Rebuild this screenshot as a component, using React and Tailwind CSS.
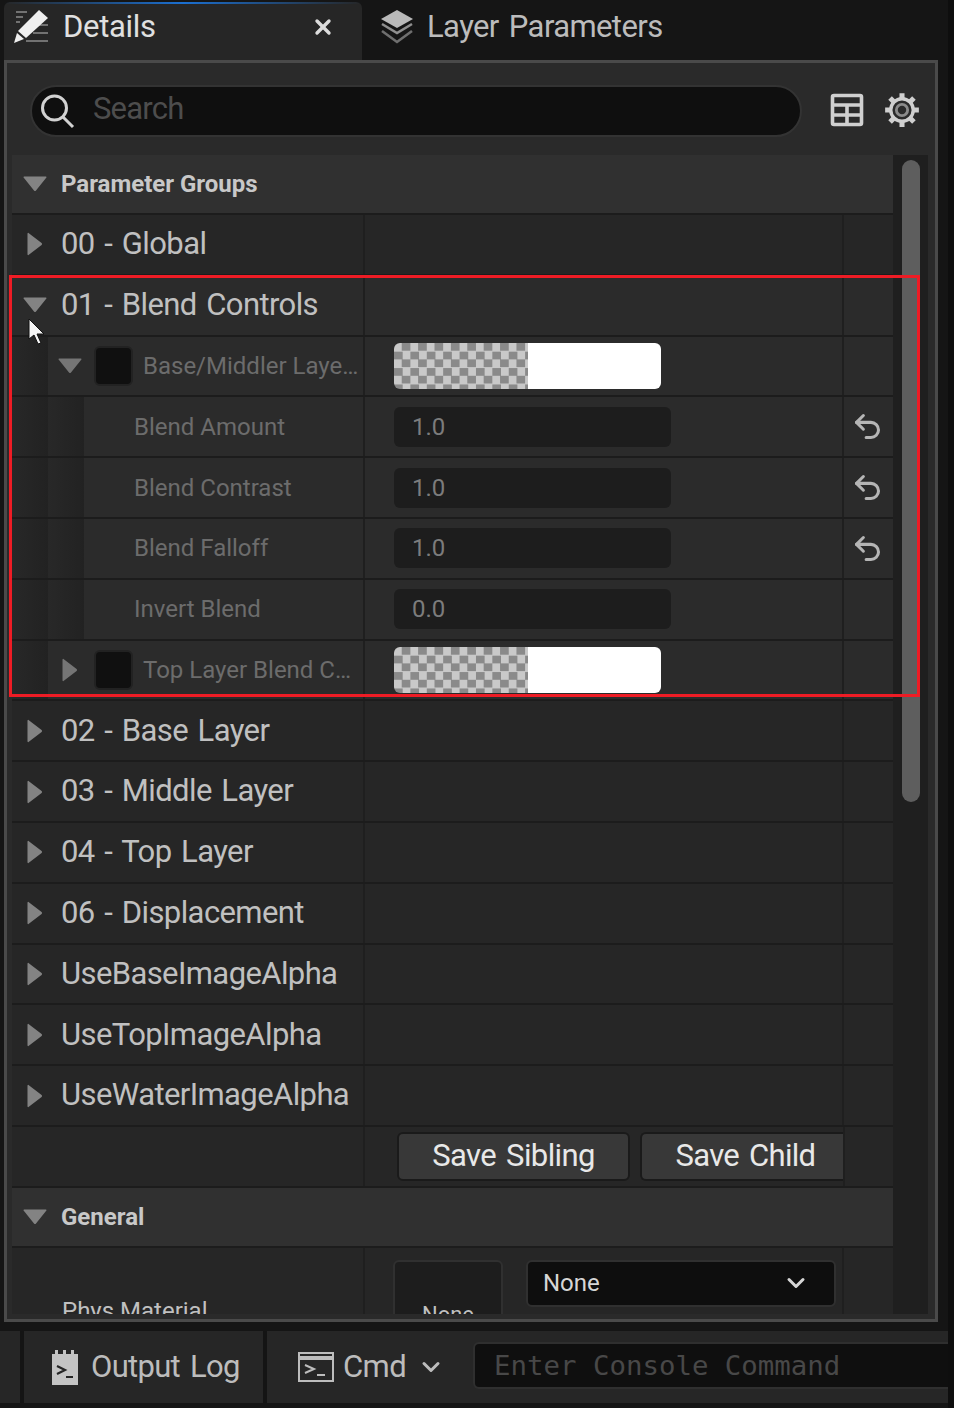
import { ChevronDown, Undo2, X } from 'lucide-react'

const Arrow = ({ open, dim }) => (
  <svg width="26" height="26" viewBox="0 0 26 26" className="shrink-0">
    {open ? (
      <path d="M2 5.5h22a.6.6 0 0 1 .4 1L14 19.5a1.4 1.4 0 0 1-2 0L1.6 6.5A.6.6 0 0 1 2 5.5z" fill={dim ? '#757575' : '#838383'} />
    ) : (
      <path d="M5.5 2.4a.6.6 0 0 1 1-.4L19.6 12a1.4 1.4 0 0 1 0 2L6.5 24a.6.6 0 0 1-1-.4z" fill={dim ? '#757575' : '#838383'} />
    )}
  </svg>
)

const DetailsIcon = () => (
  <svg width="36" height="36" viewBox="0 0 36 36" className="shrink-0">
    <path d="M3 3h11M3 8h7M3 13h4M23 16h12M20 24h15M13 32h22" stroke="#8c8c8c" strokeWidth="1.6" />
    <path d="M26 1l9 8-22 20-8-7z" fill="#efefef" />
    <path d="M4 24l7 6-10 4z" fill="#efefef" />
  </svg>
)

const LayersIcon = () => (
  <svg width="36" height="36" viewBox="0 0 36 36" className="shrink-0">
    <path d="M18 1L34 10 18 19 2 10z" fill="#b9b9b9" />
    <path d="M3 15l15 9 15-9" fill="none" stroke="#8f8f8f" strokeWidth="2.6" />
    <path d="M3 22l15 11 15-11" fill="none" stroke="#6f6f6f" strokeWidth="2.6" />
  </svg>
)

const SearchIcon = () => (
  <svg width="36" height="36" viewBox="0 0 36 36" className="shrink-0">
    <circle cx="15.5" cy="15" r="12" fill="none" stroke="#d2d2d2" strokeWidth="3" />
    <path d="M24 24l10 10" stroke="#d2d2d2" strokeWidth="3" />
  </svg>
)

const TableIcon = () => (
  <svg width="34" height="34" viewBox="0 0 34 34" className="shrink-0">
    <rect x="2.5" y="2.5" width="29" height="29" rx="1.5" fill="none" stroke="#d0d0d0" strokeWidth="3.6" />
    <path d="M2 12h30M2 22h30M17 12v20" stroke="#d0d0d0" strokeWidth="3.6" />
  </svg>
)

const GearIcon = () => (
  <svg width="36" height="36" viewBox="2 2 32 32" className="shrink-0">
    <path d="M18 3v6M18 27v6M3 18h6M27 18h6M7.4 7.4l4.2 4.2M24.4 24.4l4.2 4.2M7.4 28.6l4.2-4.2M24.4 11.6l4.2-4.2" stroke="#cfcfcf" strokeWidth="4.5" />
    <circle cx="18" cy="18" r="10" fill="none" stroke="#cfcfcf" strokeWidth="3" />
    <circle cx="18" cy="18" r="5" fill="none" stroke="#8b8b8b" strokeWidth="2.5" />
  </svg>
)

const LogIcon = () => (
  <svg width="28" height="36" viewBox="0 0 28 36" className="shrink-0">
    <path d="M1 5h3V1h3v4h5V1h3v4h5V1h3v4h4v31H1z" fill="#c4c4c4" />
    <path d="M6 17l8 4-8 4M15 28h7" fill="none" stroke="#252525" strokeWidth="2.2" />
  </svg>
)

const CmdIcon = () => (
  <svg width="36" height="30" viewBox="0 0 36 30" className="shrink-0">
    <rect x="1" y="1" width="34" height="28" fill="none" stroke="#bdbdbd" strokeWidth="2" />
    <path d="M1 6h34" stroke="#bdbdbd" strokeWidth="4" />
    <path d="M7 13l9 4-9 4M19 23h8" fill="none" stroke="#bdbdbd" strokeWidth="2" />
  </svg>
)

const CursorIcon = () => (
  <svg width="18" height="28" viewBox="0 0 18 28">
    <path d="M1 1v20l5-4 4 9 3-1-4-9h7z" fill="#f4f4f4" stroke="#111111" strokeWidth="1" />
  </svg>
)

const Swatch = () => (
  <div className="flex h-[46px] w-[267px] overflow-hidden rounded-md">
    <div className="w-[134px] bg-[repeating-conic-gradient(#8a8a8a_0_25%,#c9c9c9_0_50%)] bg-[length:16.4px_16.4px]" />
    <div className="flex-1 bg-white" />
  </div>
)

const ValueBox = ({ value }) => (
  <div className="flex h-10 w-[277px] items-center rounded-md bg-[#1d1d1d] pl-[18px] text-[24px] text-[#7c7c7c]">{value}</div>
)

const Row = ({ children, value, extra, bg = 'bg-[#262626]' }) => (
  <div className={`flex h-[60.8px] shrink-0 border-b-2 border-[#1c1c1c] ${bg}`}>
    <div className="flex w-[351px] shrink-0 items-center overflow-hidden">{children}</div>
    <div className="flex flex-1 items-center border-x-2 border-[#1f1f1f] pl-[29px]">{value}</div>
    <div className="flex w-[49px] shrink-0 items-center justify-center">{extra}</div>
  </div>
)

const Group = ({ label, open }) => (
  <Row bg={open ? 'bg-[#2b2b2b]' : 'bg-[#262626]'}>
    <div className="ml-[10px] w-[39px] shrink-0">
      <Arrow open={open} />
    </div>
    <span className="text-[31px] tracking-[-0.6px] text-[#c0c0c0] [word-spacing:2.5px]">{label}</span>
  </Row>
)

const Category = ({ label }) => (
  <div className="flex h-[60px] shrink-0 items-center border-b-2 border-[#1c1c1c] bg-[#303030]">
    <div className="ml-[10px] w-[39px] shrink-0">
      <Arrow open />
    </div>
    <span className="text-[24px] font-bold text-[#c8c8c8]">{label}</span>
  </div>
)

const LayerRow = ({ label, open }) => (
  <Row bg="bg-[#2b2b2b]" value={<Swatch />}>
    <div className="h-full w-9 shrink-0 bg-gradient-to-r from-[#282828] to-[#222222]" />
    <div className="ml-[9px] w-[37px] shrink-0">
      <Arrow open={open} dim />
    </div>
    <div className="h-[40px] w-[39px] shrink-0 rounded-md border-2 border-[#222222] bg-[#101010]" />
    <span className="ml-[10px] truncate pr-[4px] text-[24px] text-[#6c6c6c]">{label}</span>
  </Row>
)

const ParamRow = ({ label, value, reset }) => (
  <Row
    bg="bg-[#2b2b2b]"
    value={<ValueBox value={value} />}
    extra={reset && <Undo2 size={33} strokeWidth={2.2} className="mr-[3px] text-[#b5b5b5]" />}
  >
    <div className="h-full w-9 shrink-0 bg-gradient-to-r from-[#282828] to-[#222222]" />
    <div className="h-full w-9 shrink-0 bg-gradient-to-r from-[#282828] to-[#222222]" />
    <span className="ml-[50px] text-[24px] text-[#6c6c6c]">{label}</span>
  </Row>
)

export default function App() {
  return (
    <div className="relative flex h-[1408px] w-[954px] flex-col overflow-hidden border-r-[6px] border-[#0e0e0e] bg-[#151515] font-['Roboto',sans-serif]">
      <div className="flex h-[60px] shrink-0 pl-1">
        <div className="relative mt-[2px] flex w-[358px] items-center rounded-t-md bg-[#262626] pb-[8px] pl-[9px] pr-[27px]">
          <div className="absolute left-0 right-0 top-0 h-[2px] bg-[linear-gradient(90deg,transparent,#1b6fd0,transparent)]" />
          <DetailsIcon />
          <span className="ml-[14px] flex-1 text-[31px] tracking-[-0.3px] text-[#e0e0e0]">Details</span>
          <X size={24} strokeWidth={3.4} className="text-[#dcdcdc]" />
        </div>
        <div className="flex items-center pb-[6px] pl-[17px]">
          <LayersIcon />
          <span className="ml-[12px] text-[31px] tracking-[-0.6px] text-[#bcbcbc] [word-spacing:3px]">Layer Parameters</span>
        </div>
      </div>

      <div className="ml-1 flex h-[1262px] w-[934px] shrink-0 flex-col border-[3px] border-[#4a4a4a] bg-[#2a2a2a]">
        <div className="flex h-[92px] shrink-0 items-start pl-[23px] pt-[22px]">
          <div className="flex h-[52px] w-[772px] items-center rounded-full border-2 border-[#333333] bg-[#0f0f0f] pl-[7px]">
            <SearchIcon />
            <span className="-mt-1 ml-[18px] text-[31px] tracking-[-0.8px] text-[#4d4d4d]">Search</span>
          </div>
          <div className="ml-[28px] mt-[8px]">
            <TableIcon />
          </div>
          <div className="ml-[20px] mt-[7px]">
            <GearIcon />
          </div>
        </div>

        <div className="flex min-h-0 flex-1 pl-[5px] pr-[6px]">
          <div className="flex w-[881px] flex-col overflow-hidden">
            <Category label="Parameter Groups" />
            <Group label="00 - Global" />
            <Group label="01 - Blend Controls" open />
            <LayerRow label="Base/Middler Layer Blend Controls" open />
            <ParamRow label="Blend Amount" value="1.0" reset />
            <ParamRow label="Blend Contrast" value="1.0" reset />
            <ParamRow label="Blend Falloff" value="1.0" reset />
            <ParamRow label="Invert Blend" value="0.0" />
            <LayerRow label="Top Layer Blend Controls" />
            <Group label="02 - Base Layer" />
            <Group label="03 - Middle Layer" />
            <Group label="04 - Top Layer" />
            <Group label="06 - Displacement" />
            <Group label="UseBaseImageAlpha" />
            <Group label="UseTopImageAlpha" />
            <Group label="UseWaterImageAlpha" />
            <Row
              value={
                <div className="ml-[3px] flex gap-[10px]">
                  <div className="flex h-[49px] w-[233px] items-center justify-center rounded-md border-2 border-[#1a1a1a] bg-[#383838] text-[31px] tracking-[-0.6px] text-[#e8e8e8] [word-spacing:3px]">Save Sibling</div>
                  <div className="flex h-[49px] w-[203px] items-center justify-center rounded-l-md border-y-2 border-l-2 border-[#1a1a1a] bg-[#383838] pl-[6px] text-[31px] tracking-[-0.7px] text-[#e8e8e8] [word-spacing:3px]">Save Child</div>
                </div>
              }
            />
            <Category label="General" />
            <div className="flex min-h-0 flex-1 bg-[#262626]">
              <div className="flex w-[351px] shrink-0 items-start overflow-hidden pl-[50px] pt-[48px]">
                <span className="text-[24px] leading-[30px] text-[#c0c0c0]">Phys Material</span>
              </div>
              <div className="flex flex-1 gap-[23px] overflow-hidden border-x-2 border-[#1f1f1f] pl-[28px] pt-[12px]">
                <div className="flex h-[100px] w-[110px] shrink-0 justify-center rounded-md border-2 border-[#303030] bg-[#1d1d1d] pt-[36px] text-[22px] text-[#c0c0c0]">None</div>
                <div className="flex h-[47px] w-[310px] items-center justify-between rounded-md border-2 border-[#303030] bg-[#0e0e0e] pl-[15px] pr-[24px] text-[24px] text-[#d6d6d6]">
                  None
                  <ChevronDown size={28} strokeWidth={2.6} className="text-[#d6d6d6]" />
                </div>
              </div>
              <div className="w-[49px] shrink-0" />
            </div>
          </div>
          <div className="flex w-[35px] shrink-0 justify-center bg-[#1f1f1f] pt-[5px]">
            <div className="h-[642px] w-[18px] rounded-full bg-[#5e5e5e]" />
          </div>
        </div>
        <div className="h-[5px] shrink-0" />
      </div>

      <div className="mt-[9px] flex h-[72px] shrink-0 bg-[#262626]">
        <div className="w-[24px] shrink-0 border-r-4 border-[#141414]" />
        <div className="flex w-[243px] shrink-0 items-center border-r-4 border-[#141414] pl-[27px]">
          <LogIcon />
          <span className="ml-[12px] text-[31px] tracking-[-0.7px] text-[#bcbcbc] [word-spacing:3px]">Output Log</span>
        </div>
        <div className="flex w-[206px] shrink-0 items-center pl-[31px]">
          <CmdIcon />
          <span className="ml-[9px] text-[31px] tracking-[-0.6px] text-[#bcbcbc]">Cmd</span>
          <ChevronDown size={28} strokeWidth={2.6} className="ml-[11px] text-[#bcbcbc]" />
        </div>
        <div className="mt-[11px] flex h-[47px] flex-1 items-center rounded-l-md border-2 border-r-0 border-[#2f2f2f] bg-[#0f0f0f] pl-[19px] font-['DejaVu_Sans_Mono',monospace] text-[27.4px] text-[#484848]">
          Enter Console Command
        </div>
      </div>

      <div className="absolute left-[9px] top-[275px] h-[422px] w-[911px] border-[3px] border-[#ee1c25]" />
      <div className="absolute left-[28px] top-[318px]">
        <CursorIcon />
      </div>
    </div>
  )
}
